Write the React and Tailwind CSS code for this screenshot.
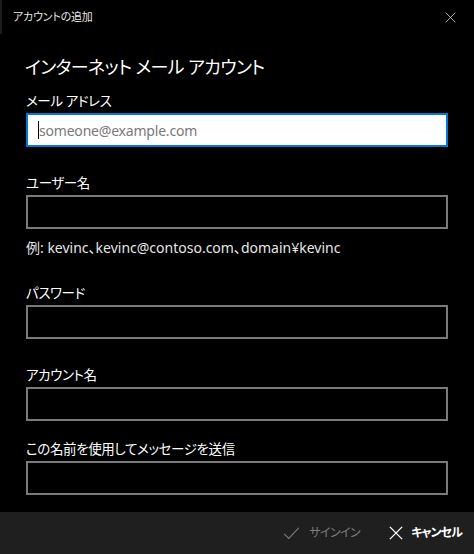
import { useState } from "react"

const FONT =
  "font-['Segoe_UI','Noto_Sans','Noto_Sans_CJK_JP',sans-serif] [font-feature-settings:'palt']"

function Field({ label, mt, focused, placeholder, value, onChange }) {
  return (
    <div className={mt}>
      <label className="block text-[13.5px] leading-5 tracking-[-0.4px] text-white">{label}</label>
      <div
        className={`mt-[2px] flex h-[34px] items-center border-2 px-[10px] ${
          focused ? "border-[#0078d7] bg-white" : "border-[#7a7a7a] bg-black"
        }`}
      >
        {focused && <span className="h-[18px] w-px bg-black" />}
        <input
          value={value}
          onChange={e => onChange(e.target.value)}
          placeholder={placeholder}
          className={`min-w-0 flex-1 bg-transparent text-[14px] tracking-[-0.2px] outline-none placeholder:text-[#7a7a7a] ${
            focused ? "text-black" : "text-white"
          }`}
        />
      </div>
    </div>
  )
}

function CheckIcon({ className }) {
  return (
    <svg viewBox="0 0 20 16" className={className} fill="none" stroke="currentColor" strokeWidth="1.3">
      <path d="M1 8.5 L6.5 14 L19 1" />
    </svg>
  )
}

function CloseIcon({ className, strokeWidth = 1.2 }) {
  return (
    <svg viewBox="0 0 16 16" className={className} fill="none" stroke="currentColor" strokeWidth={strokeWidth}>
      <path d="M1 1 L15 15 M15 1 L1 15" />
    </svg>
  )
}

export default function App() {
  const [form, setForm] = useState({
    email: "",
    user: "",
    password: "",
    account: "",
    sender: ""
  })

  const set = key => v => setForm(f => ({ ...f, [key]: v }))

  return (
    <div className={`flex h-[554px] w-[474px] flex-col bg-black ${FONT}`}>
      <div className="flex h-[34px] items-center justify-between border-l-2 border-[#1c1c1c] pr-[18px] pl-[11px]">
        <span className="text-[11px] tracking-[-0.2px] text-[#e6e6e6]">アカウントの追加</span>
        <CloseIcon className="h-[11px] w-[11px] text-[#d0d0d0]" />
      </div>

      <div className="px-[26px]">
        <h1 className="mt-[19px] -ml-px text-[18px] leading-7 tracking-[-0.6px] text-white">
          インターネット メール アカウント
        </h1>

        <Field
          label="メール アドレス"
          mt="mt-[10px]"
          focused
          placeholder="someone@example.com"
          value={form.email}
          onChange={set("email")}
        />
        <Field label="ユーザー名" mt="mt-[26px]" value={form.user} onChange={set("user")} />
        <p className="mt-[9px] text-[14px] leading-5 text-[#e6e6e6]">
          例: kevinc、kevinc@contoso.com、domain¥kevinc
        </p>
        <Field label="パスワード" mt="mt-[25px]" value={form.password} onChange={set("password")} />
        <Field label="アカウント名" mt="mt-[26px]" value={form.account} onChange={set("account")} />
        <Field
          label="この名前を使用してメッセージを送信"
          mt="mt-[18px]"
          value={form.sender}
          onChange={set("sender")}
        />
      </div>

      <div className="flex-1" />

      <div className="flex h-[42px] items-center justify-end bg-[#1f1f1f] pr-[12px]">
        <button type="button" disabled className="flex items-center text-[12px] tracking-[-0.6px] text-[#7d7d7d]">
          <CheckIcon className="h-[13px] w-[17px]" />
          <span className="ml-[9px]">サインイン</span>
        </button>
        <button
          type="button"
          className="ml-[29px] flex items-center text-[12px] font-semibold tracking-[-0.9px] text-white"
        >
          <CloseIcon className="h-[14px] w-[14px]" strokeWidth={1.6} />
          <span className="ml-[8px]">キャンセル</span>
        </button>
      </div>
    </div>
  )
}
